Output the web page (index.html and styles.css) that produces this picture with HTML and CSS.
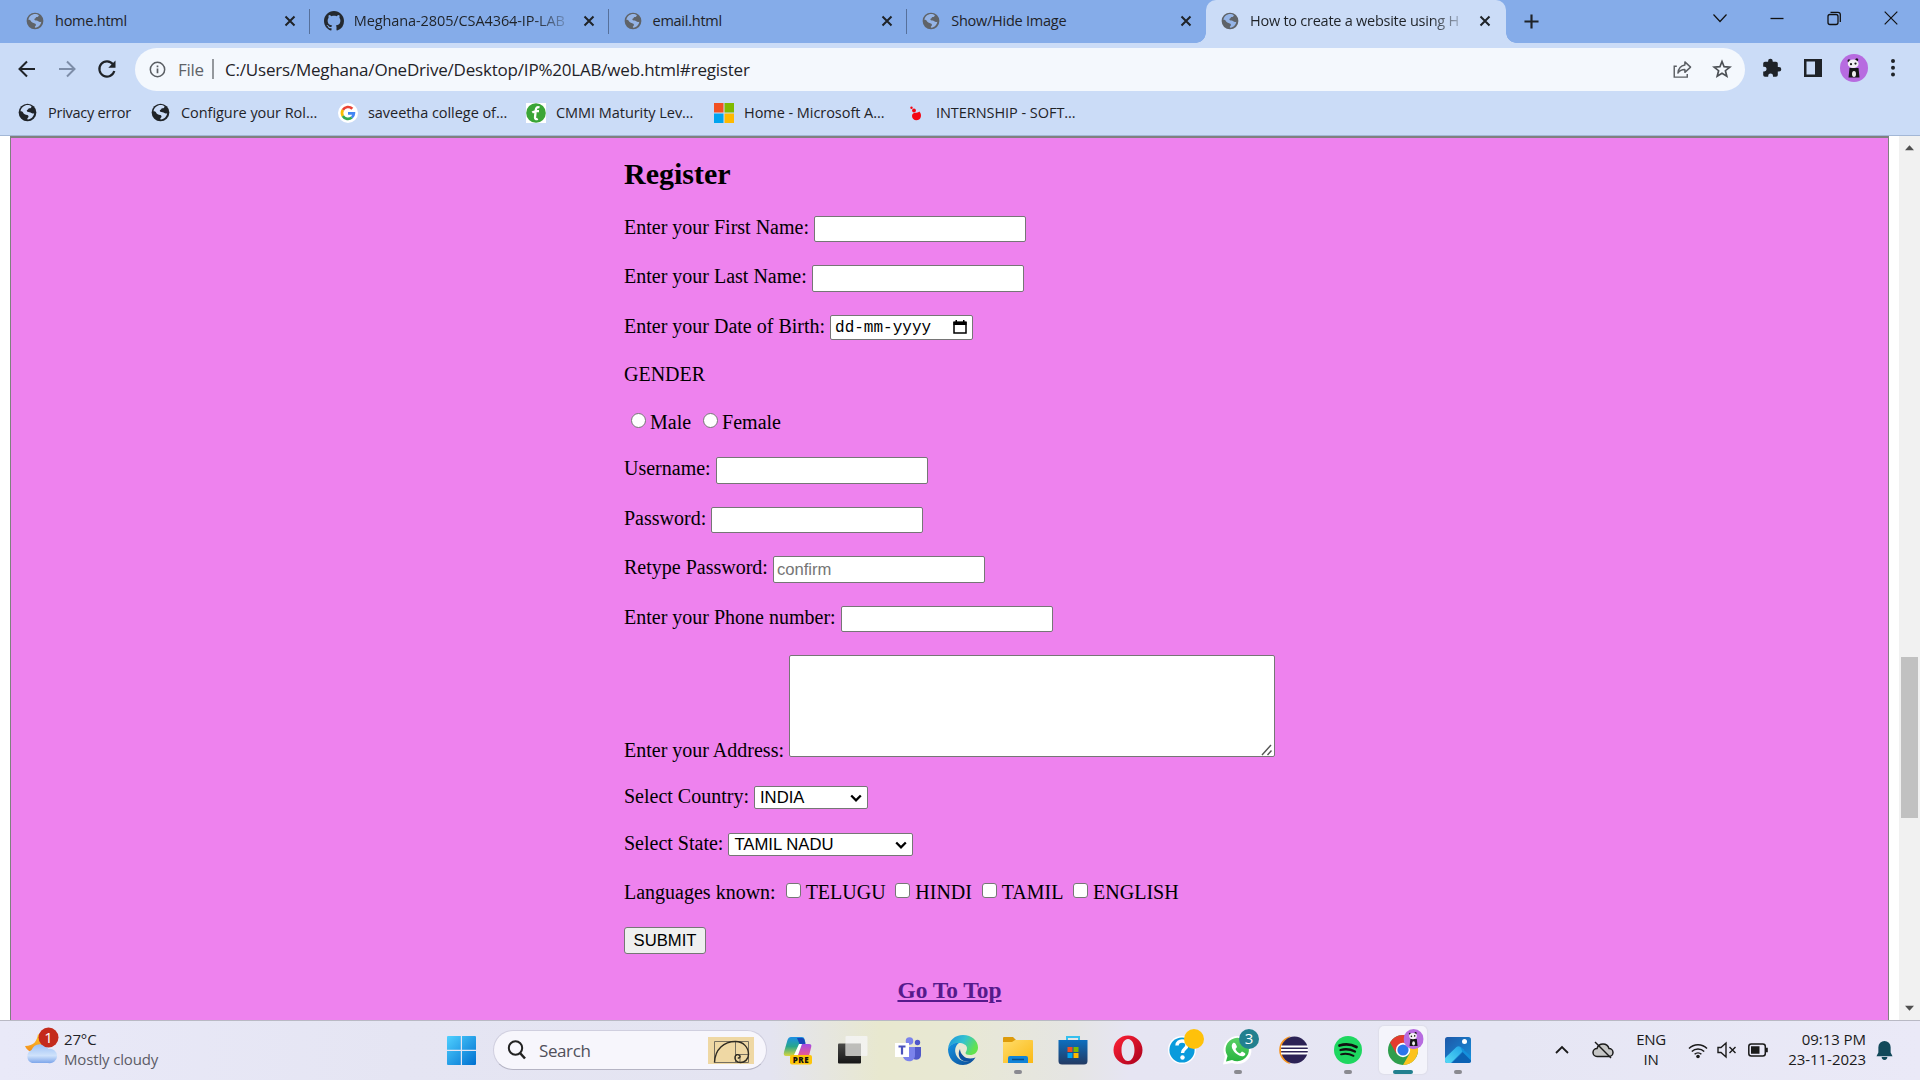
FILE: index.html
```html
<!DOCTYPE html>
<html lang="en">
<head>
<meta charset="utf-8">
<title>How to create a website using HTML</title>
<link rel="stylesheet" href="styles.css">
</head>
<body>
<svg class="defs" width="0" height="0">
  <defs>
    <symbol id="globe" viewBox="0 0 20 20"><circle cx="10" cy="10" r="9.3" fill="currentColor"/><path class="land" d="M7.5 2.7c2.6-1 5-.5 6.8.9-.3 1.500-1.200 2-2.600 1.900-1 .1-.8 1.300-1.600 1.700-1.200.2-.9 1.500-.2 2 1.200.5 3.200.1 4.200 1.400 1 .8 2 .3 2.900.2-.4 3.300-3 6.200-6.600 6.600-1.100-.5-.5-1.700.3-2.200.9-.9.1-2.200-1-2.500-1.700-.5-3.900-1.100-4.500-3-.6-1-1.700-1.200-2.600-1.100.5-2.900 2.100-4.900 4.900-5.900z"/></symbol>
    <symbol id="cross" viewBox="0 0 12 12"><path d="M1.500 1.500l9 9M10.500 1.500l-9 9" stroke="#1f2328" stroke-width="2"/></symbol>
    <symbol id="panda" viewBox="0 0 28 28"><circle cx="14" cy="14" r="14" fill="#b76be0"/><circle cx="9" cy="6.800" r="1.500" fill="#171717"/><circle cx="16.800" cy="5.800" r="1.500" fill="#171717"/><path d="M9.500 14h9l1 9.500H8.500z" fill="#171717"/><ellipse cx="13.200" cy="9.800" rx="5.400" ry="4.300" fill="#f3f0f3"/><circle cx="11" cy="10.200" r="1.100" fill="#171717"/><circle cx="15.500" cy="9.600" r="1.100" fill="#171717"/><ellipse cx="14" cy="20" rx="2" ry="3" fill="#eee"/></symbol>
    <symbol id="caret" viewBox="0 0 12 8"><path d="M1.200 1.500L6 6.300l4.800-4.800" fill="none" stroke="#000" stroke-width="2.300"/></symbol>
    <linearGradient id="win" x1="0" y1="0" x2="1" y2="1"><stop offset="0" stop-color="#4fd0ff"/><stop offset="1" stop-color="#0070d0"/></linearGradient>
    <linearGradient id="cloud" x1="0" y1="0" x2="0" y2="1"><stop offset="0" stop-color="#9cc0f6"/><stop offset=".6" stop-color="#cfe2fb"/><stop offset="1" stop-color="#7ba4ea"/></linearGradient>
    <linearGradient id="moon" x1="0" y1="0" x2="0" y2="1"><stop offset="0" stop-color="#ffc928"/><stop offset="1" stop-color="#f28a1c"/></linearGradient>
    <linearGradient id="copA" x1="0" y1="0" x2="0" y2="1"><stop offset="0" stop-color="#1d8fe6"/><stop offset=".5" stop-color="#29a68b"/><stop offset="1" stop-color="#d8d63e"/></linearGradient>
    <linearGradient id="copB" x1="0" y1="0" x2="0" y2="1"><stop offset="0" stop-color="#a54be3"/><stop offset="1" stop-color="#fb5d7d"/></linearGradient>
    <linearGradient id="edgeA" x1="0" y1="0" x2="1" y2=".4"><stop offset="0" stop-color="#1a8fe0"/><stop offset=".55" stop-color="#34c3cf"/><stop offset="1" stop-color="#62e24e"/></linearGradient>
    <linearGradient id="edgeB" x1="0" y1="0" x2="1" y2="1"><stop offset="0" stop-color="#1593e2"/><stop offset="1" stop-color="#0b4a94"/></linearGradient>
    <linearGradient id="fold" x1="0" y1="0" x2="1" y2="1"><stop offset="0" stop-color="#ffdc6a"/><stop offset="1" stop-color="#fbb914"/></linearGradient>
    <linearGradient id="store" x1="0" y1="0" x2="0" y2="1"><stop offset="0" stop-color="#0d6fbf"/><stop offset="1" stop-color="#233a63"/></linearGradient>
    <linearGradient id="opera" x1="0" y1="0" x2="1" y2="1"><stop offset="0" stop-color="#ff2236"/><stop offset="1" stop-color="#a8001c"/></linearGradient>
    <linearGradient id="task" x1="0" y1="0" x2="0" y2="1"><stop offset="0" stop-color="#4a4a48"/><stop offset="1" stop-color="#161616"/></linearGradient>
    <linearGradient id="photo" x1="0" y1="0" x2="1" y2="1"><stop offset="0" stop-color="#1d58a8"/><stop offset="1" stop-color="#1790dc"/></linearGradient>
    <linearGradient id="hill" x1="0" y1="1" x2="1" y2="0"><stop offset="0" stop-color="#57dbf6"/><stop offset="1" stop-color="#1fa0e6"/></linearGradient>
    <linearGradient id="wa" x1="0" y1="0" x2="0" y2="1"><stop offset="0" stop-color="#5bd066"/><stop offset="1" stop-color="#27b43e"/></linearGradient>
  </defs>
</svg>

<header class="browser">
  <div class="tabstrip">
    <div class="tab"><svg class="fav grey"><use href="#globe"/></svg><span class="title t-home">home.html</span><svg class="x"><use href="#cross"/></svg></div>
    <div class="tab"><svg class="fav gh" viewBox="0 0 16 16"><path fill="#24292f" d="M8 0C3.580 0 0 3.580 0 8c0 3.540 2.290 6.530 5.470 7.590.4.070.55-.17.55-.38 0-.19-.01-.82-.01-1.490-2.010.37-2.530-.49-2.690-.94-.09-.23-.48-.94-.82-1.130-.28-.15-.68-.52-.01-.53.63-.01 1.080.58 1.230.82.72 1.210 1.870.87 2.330.66.070-.52.280-.87.510-1.070-1.780-.2-3.640-.89-3.640-3.950 0-.87.310-1.590.82-2.150-.08-.2-.36-1.020.080-2.120 0 0 .67-.21 2.200.82.640-.18 1.320-.27 2-.27s1.360.09 2 .27c1.530-1.040 2.200-.82 2.200-.82.440 1.100.160 1.920.080 2.120.510.560.82 1.270.82 2.150 0 3.070-1.870 3.750-3.650 3.950.290.250.540.730.540 1.480 0 1.070-.01 1.930-.01 2.200 0 .210.150.460.550.380A8.010 8.010 0 0 0 16 8c0-4.420-3.580-8-8-8z"/></svg><span class="title fade repo">Meghana-2805/CSA4364-IP-LAB</span><svg class="x"><use href="#cross"/></svg></div>
    <div class="tab"><svg class="fav grey"><use href="#globe"/></svg><span class="title">email.html</span><svg class="x"><use href="#cross"/></svg></div>
    <div class="tab last"><svg class="fav grey"><use href="#globe"/></svg><span class="title">Show/Hide Image</span><svg class="x"><use href="#cross"/></svg></div>
    <div class="tab active"><svg class="fav grey"><use href="#globe"/></svg><span class="title fade">How to create a website using H</span><svg class="x"><use href="#cross"/></svg></div>
    <svg class="plus" viewBox="0 0 16 16"><path d="M8 0.500v15M.5 8h15" stroke="#1f2328" stroke-width="2.300"/></svg>
    <div class="controls">
      <svg viewBox="0 0 20 20"><path d="M3.500 6.500l6.500 7 6.500-7" fill="none" stroke="#111" stroke-width="1.200"/></svg>
      <svg viewBox="0 0 20 20"><path d="M3.500 10.500h13" stroke="#111" stroke-width="1.300"/></svg>
      <svg viewBox="0 0 20 20"><rect x="4" y="6.500" width="10" height="10" rx="2" fill="none" stroke="#111" stroke-width="1.300"/><path d="M6.500 4.300h7.500q2.300 0 2.300 2.300v7.400" fill="none" stroke="#111" stroke-width="1.300"/></svg>
      <svg viewBox="0 0 20 20"><path d="M3.700 3.700l12.600 12.600M16.300 3.700L3.700 16.300" stroke="#111" stroke-width="1.200"/></svg>
    </div>
  </div>

  <div class="toolbar">
    <svg class="nav" viewBox="0 0 20 20"><path d="M18 10H3M10 2.500L2.500 10l7.500 7.500" fill="none" stroke="#1f2328" stroke-width="2"/></svg>
    <svg class="nav" viewBox="0 0 20 20"><path d="M2 10h15M10 2.500l7.500 7.500-7.500 7.500" fill="none" stroke="#7d8da8" stroke-width="2"/></svg>
    <svg class="nav" viewBox="0 0 20 20"><path d="M16 5.300A7.600 7.600 0 1 0 17.300 12" fill="none" stroke="#1f2328" stroke-width="2.200"/><path d="M18.500 1.500v7.200h-7.200z" fill="#1f2328"/></svg>
    <div class="omnibox">
      <svg class="info" viewBox="0 0 18 18"><circle cx="9" cy="9" r="7.600" fill="none" stroke="#5a5e63" stroke-width="1.600"/><path d="M9 8v5M9 4.700v1.800" stroke="#5a5e63" stroke-width="1.800"/></svg>
      <span class="scheme">File</span><i class="bar"></i><span class="url">C:/Users/Meghana/OneDrive/Desktop/IP%20LAB/web.html#register</span>
      <svg class="share" viewBox="0 0 20 20"><path d="M4 6.500H1.300V18H15v-3.200" fill="none" stroke="#5a5e63" stroke-width="1.500"/><path d="M12.500 2l6 5.500-6 5.500V10c-3.500 0-5.500 1-7.300 3.800C5.700 9 8 5.800 12.500 5.200z" fill="none" stroke="#5a5e63" stroke-width="1.500" stroke-linejoin="round"/></svg>
      <svg class="star" viewBox="0 0 20 20"><path d="M10 2.500l2.100 5.200 5.700.4-4.400 3.600 1.400 5.500L10 14.300l-4.800 2.900 1.400-5.500L2.200 8.100l5.700-.4z" fill="none" stroke="#4c5055" stroke-width="1.700"/></svg>
    </div>
    <svg class="ext" viewBox="0 0 20 20"><path fill="#1f2328" d="M17 9h-1.200V5.500A1.800 1.800 0 0 0 14 3.700h-3.300V3a2.300 2.300 0 0 0-4.600 0v.7H3A1.800 1.800 0 0 0 1.200 5.500v3.200h1a2.400 2.400 0 0 1 0 4.800h-1V17A1.800 1.800 0 0 0 3 18.800h3.200v-1a2.400 2.400 0 0 1 4.800 0v1h3a1.800 1.800 0 0 0 1.800-1.800v-3.400H17A2.300 2.300 0 0 0 17 9z"/></svg>
    <svg class="side" viewBox="0 0 20 20"><path fill="#1f2328" fill-rule="evenodd" d="M1 1h18v18H1zM3.500 3.500v13H12v-13z"/></svg>
    <svg class="avatar"><use href="#panda"/></svg>
    <svg class="dots" viewBox="0 0 6 20"><circle cx="3" cy="3" r="2" fill="#1f2328"/><circle cx="3" cy="9.700" r="2" fill="#1f2328"/><circle cx="3" cy="16.400" r="2" fill="#1f2328"/></svg>
  </div>

  <nav class="bookmarks">
    <div class="bm b1"><svg class="dark"><use href="#globe"/></svg><span>Privacy error</span></div>
    <div class="bm b2"><svg class="dark"><use href="#globe"/></svg><span>Configure your Rol...</span></div>
    <div class="bm b3"><svg viewBox="0 0 20 20"><circle cx="10" cy="10" r="10" fill="#fff"/><g fill="none" stroke-width="2.700"><path d="M14.300 5.800A6 6 0 0 0 4.800 7" stroke="#ea4335"/><path d="M4.800 7a6 6 0 0 0 0 6" stroke="#fbbc05"/><path d="M4.800 13a6 6 0 0 0 9 1.500" stroke="#34a853"/><path d="M13.800 14.500A5.500 5.500 0 0 0 15.900 10.300H10" stroke="#4285f4"/></g></svg><span>saveetha college of...</span></div>
    <div class="bm b4"><svg viewBox="0 0 20 20"><path fill="#fff" d="M0 0h20v20H0z"/><circle cx="10" cy="10" r="9.800" fill="#3aa537"/><path d="M13.500 4.500c-2.500-1-3.500.5-3.800 3L9 14.500c0 2 1.500 2 2.700 1.200M6.300 9.500c2-1.500 3-1.300 6.700-1.300" fill="none" stroke="#fff" stroke-width="2.300"/></svg><span>CMMI Maturity Lev...</span></div>
    <div class="bm b5"><svg viewBox="0 0 20 20"><path fill="#f25022" d="M0 0h9.500v9.500H0z"/><path fill="#7fba00" d="M10.500 0H20v9.500h-9.500z"/><path fill="#00a4ef" d="M0 10.500h9.500V20H0z"/><path fill="#ffb900" d="M10.500 10.500H20V20h-9.500z"/></svg><span>Home - Microsoft A...</span></div>
    <div class="bm b6"><svg viewBox="0 0 20 20"><path fill="#f40612" d="M6 13c0-3 2.500-3.500 4.500-3.200 1.500-.3 2-.5 2.800-1.300 1.500 1.500 2 3.500 1.500 5.500-.6 2.300-2.300 3.200-4.500 3.200S6 15.500 6 13z"/><circle cx="8" cy="7.500" r="1.900" fill="#f40612"/><circle cx="5.500" cy="4.800" r="1.200" fill="#f40612"/></svg><span>INTERNSHIP - SOFT...</span></div>
  </nav>
</header>

<main class="viewport">
  <section class="register">
    <form class="form">
      <h2>Register</h2>
      <div class="row"><label>Enter your First Name:</label><input type="text" class="field"></div>
      <div class="row h50"><label>Enter your Last Name:</label><input type="text" class="field tall"></div>
      <div class="row h48"><label>Enter your Date of Birth:</label><div class="date"><span>dd-mm-yyyy</span><svg viewBox="0 0 14 14"><path d="M1 2.500h12v10.500H1z" fill="none" stroke="#000" stroke-width="1.500"/><path d="M.5 1.500h13v3.500H.5zM2.500 0h1.500v2H2.500zM10 0h1.500v2H10z"/></svg></div></div>
      <div class="row h48"><label>GENDER</label></div>
      <div class="row h46 choices"><i class="radio"></i><span class="male">Male</span><i class="radio"></i><span>Female</span></div>
      <div class="row h50"><label>Username:</label><input type="text" class="field tall"></div>
      <div class="row"><label>Password:</label><input type="password" class="field"></div>
      <div class="row h50"><label>Retype Password:</label><input type="password" class="field tall" placeholder="confirm"></div>
      <div class="row"><label>Enter your Phone number:</label><input type="text" class="field"></div>
      <div class="row address"><label>Enter your Address:</label><div class="areabox"><textarea class="area"></textarea><svg class="grip" viewBox="0 0 12 12"><path d="M1 11L10 1M6.500 11L10.500 6.500" stroke="#555" stroke-width="1.400"/></svg></div></div>
      <div class="row h47"><label>Select Country:</label><div class="select country"><span>INDIA</span><svg><use href="#caret"/></svg></div></div>
      <div class="row"><label>Select State:</label><div class="select state"><span>TAMIL NADU</span><svg><use href="#caret"/></svg></div></div>
      <div class="row h46 langs"><label>Languages known:</label><i class="check"></i><span>TELUGU</span><i class="check"></i><span>HINDI</span><i class="check"></i><span>TAMIL</span><i class="check"></i><span>ENGLISH</span></div>
      <button type="button" class="submit">SUBMIT</button>
    </form>
    <h3><a href="#top">Go To Top</a></h3>
  </section>
  <aside class="scroll">
    <svg viewBox="0 0 10 6"><path d="M0 5.500L5 0l5 5.500z" fill="#505050"/></svg>
    <div class="track"><div class="thumb"></div></div>
    <svg viewBox="0 0 10 6"><path d="M0 .5L5 6l5-5.500z" fill="#505050"/></svg>
  </aside>
</main>

<footer class="taskbar">
  <div class="weather">
    <svg viewBox="0 0 36 38"><path d="M14 7c-1 7-4 12-13 12 2 6 10 8 15 4 5-5 4-12-2-16z" fill="url(#moon)"/><path d="M8 36a7 7 0 0 1-.5-13 9.500 9.500 0 0 1 17-1A7.200 7.200 0 1 1 24 36z" fill="url(#cloud)"/><circle cx="24.500" cy="10.500" r="10" fill="#c42b1c"/><text x="24.500" y="16" text-anchor="middle" class="badge">1</text></svg>
    <div class="wtext"><span>27°C</span><span class="muted">Mostly cloudy</span></div>
  </div>
  <svg class="start" viewBox="0 0 29 29"><path fill="url(#win)" d="M0 1q0-1 1-1h12.800v13.800H0zM15 0h13q1 0 1 1v12.800H15zM0 15h13.800v14H1q-1 0-1-1zM15 15h14v13q0 1-1 1H15z"/></svg>
  <div class="search">
    <svg class="glass" viewBox="0 0 20 20"><circle cx="8.500" cy="8" r="6.700" fill="none" stroke="#222" stroke-width="2"/><path d="M13 13l5 5.500" stroke="#222" stroke-width="2.600"/></svg>
    <span>Search</span>
    <svg class="spiral" viewBox="0 0 46 27"><path fill="#efd8a4" d="M0 0h46v27H0z"/><path d="M6.500 4.500h34v21h-34zM27.500 4.500v21M27.500 17.500h13M32 17.500v8" fill="none" stroke="#77705f" stroke-width="1"/><path d="M6.500 25.500C7 12 16 4.500 27.500 4.500c8 0 13 6 13 13 0 5-4 8-8 8s-6-3-5.500-5.500 3-3 4.500-1.500-.5 3.500-1.500 2" fill="none" stroke="#2f2b22" stroke-width="1.400"/></svg>
  </div>
  <div class="apps">
    <div class="app"><svg viewBox="0 0 30 30"><path d="M8 2h11q2 0 2.500 2l1 4-6 8-3 5H3q-3 0-2-4L4.500 5Q5.500 2 8 2z" fill="url(#copA)"/><path d="M14 3h5q2 0 2.500 2l1 4h-6z" fill="#1746b8"/><path d="M19 9h7q3 0 2.200 3l-2 8q-1 3-4 3h-9z" fill="url(#copB)"/><path d="M16 9h3l-4 11h-4z" fill="#fff"/><rect x="7" y="20" width="22" height="9.500" rx="2" fill="#fdc50b"/><text x="18" y="27.800" text-anchor="middle" class="pre">PRE</text></svg></div>
    <div class="app"><svg viewBox="0 0 30 30"><rect x="0" y="8.500" width="23" height="20" rx="1" fill="url(#task)"/><rect x="7.500" y="1" width="22" height="20" rx="1" fill="#f4f4f2" opacity=".88"/><path d="M7.500 8.500H23V21H7.500z" fill="#a9a9a4" opacity=".6"/></svg></div>
    <div class="app"><svg viewBox="0 0 30 30"><circle cx="16.500" cy="6" r="3.800" fill="#7b83eb"/><circle cx="24.500" cy="7.500" r="2.700" fill="#5059c9"/><path d="M19 12h9v8c0 5-6 6-9 3z" fill="#5059c9"/><path d="M10 12h12v8c0 8-10 8-12 2z" fill="#7b83eb"/><path fill="#fff" d="M2 8h14v14H2z"/><path d="M5.500 11.500h7M9 11.500v8" stroke="#4b53bc" stroke-width="2.200"/></svg></div>
    <div class="app"><svg viewBox="0 0 30 30"><path d="M0 14C1 5 7 0 15 0c9 0 15 6 15 12.500 0 5-4 7.500-8 7.500-3 0-4.500-1-4.500-2s1.500-2 1.500-5c0-3-4-5-8-5-5 0-9 2-11 6z" fill="url(#edgeA)"/><path d="M0 14C2 9 7 7.500 11 8c-3 2-4.500 6-3.500 10 1 5 6 9 11 8.500 4-.4 6-2 9-4C25 27 20 30 15 30 6 30 0 23 0 14z" fill="url(#edgeB)"/><path d="M12 14c-3 5-.5 12 6 12.500 4 .2 7-1.500 9.500-4-4 1.500-9 1.500-12-1.500-2-2-3.500-4-3.500-7z" fill="#0b4fa0"/></svg></div>
    <div class="app run"><svg viewBox="0 0 30 30"><path d="M0 3q0-1 1-1h9l3 3-3 4H0z" fill="#dd9b0a"/><path d="M0 7h9l3-2h17q1 0 1 1v22H0z" fill="url(#fold)"/><path d="M5 28v-5q0-2 2-2h16q2 0 2 2v5z" fill="#1184d8"/><path d="M9 24.500h12" stroke="#0a4d86" stroke-width="1.500"/></svg></div>
    <div class="app"><svg viewBox="0 0 30 30"><path d="M9 6V2h12v4" fill="none" stroke="#35c0ee" stroke-width="2"/><path d="M.5 5h29v21q0 3.500-3.500 3.500H4Q.5 29.500.5 26z" fill="url(#store)"/><path fill="#f25022" d="M9.500 12h5v5h-5z"/><path fill="#7fba00" d="M15.500 12h5v5h-5z"/><path fill="#00a4ef" d="M9.500 18h5v5h-5z"/><path fill="#ffb900" d="M15.500 18h5v5h-5z"/></svg></div>
    <div class="app"><svg viewBox="0 0 30 30"><path fill="url(#opera)" fill-rule="evenodd" d="M15 .5a14.500 14.500 0 1 0 0 29 14.500 14.500 0 1 0 0-29zM15 4c4 0 6.500 5 6.500 11S19 26 15 26 8.500 21 8.500 15 11 4 15 4z"/></svg></div>
    <div class="app"><svg viewBox="0 0 30 30"><circle cx="14" cy="15" r="14" fill="#fff"/><circle cx="14" cy="15" r="12.600" fill="#0a9bdc"/><path d="M9 10.500c0-6 10-6 10-.5 0 4-4.500 3.500-4.500 8" fill="none" stroke="#fff" stroke-width="3.400"/><circle cx="14.500" cy="22.500" r="2.200" fill="#fff"/><circle cx="26" cy="4" r="10" fill="#ffc10a"/></svg></div>
    <div class="app run"><svg viewBox="0 0 30 30"><path d="M0 29.500l2-8A14 14 0 1 1 9 28z" fill="#fff"/><path d="M3 26.500l1.500-5.500A11.700 11.700 0 1 1 9 25z" fill="url(#wa)"/><path d="M10 8c-3 3 0 8 3 10.500s7 4 9 1.500c1-1.500 0-2-3-3.500l-2 2c-2-.5-4-3-4.500-4.500l1.500-2c-1-3-2-5-4-4z" fill="#fff"/><circle cx="26" cy="4" r="10" fill="#22808f"/><text x="26" y="9.300" text-anchor="middle" class="badge">3</text></svg></div>
    <div class="app"><svg viewBox="0 0 30 30"><path d="M13 1a14.200 14.200 0 0 0 0 28C5 25 5 5 13 1z" fill="#f7941e"/><circle cx="16.500" cy="15" r="13.400" fill="#2c2255"/><path d="M3 11.500h27M3 15h27M3 18.500h27" stroke="#fff" stroke-width="1.800"/></svg></div>
    <div class="app run"><svg viewBox="0 0 30 30"><circle cx="15" cy="15" r="14" fill="#1ed760"/><g fill="none" stroke="#111" stroke-linecap="round"><path d="M6.500 10.500c6-1.800 12-1.200 17 1.500" stroke-width="2.700"/><path d="M7.500 15c5-1.300 10-.8 14.500 1.500" stroke-width="2.300"/><path d="M8 19.300c4-1 8.500-.6 12.500 1.500" stroke-width="1.900"/></g></svg></div>
    <div class="app current"><svg viewBox="0 0 30 30"><circle cx="15" cy="15" r="15" fill="#2e9e4c"/><path d="M2 7.500A15 15 0 0 1 28 7.500L15 8 8.500 18.800z" fill="#e33b2e"/><path d="M28 7.500A15 15 0 0 1 15 30l6.500-11.300L22 8z" fill="#fcc31e"/><circle cx="15" cy="15" r="7.200" fill="#fff"/><circle cx="15" cy="15" r="5.600" fill="#2a74ea"/><g transform="translate(15.500 -6) scale(.72)"><use href="#panda" width="28" height="28"/></g></svg></div>
    <div class="app run"><svg viewBox="0 0 30 30"><rect x="2" y="2" width="26" height="26" rx="2.500" fill="url(#photo)"/><path d="M9 28L20 17l8 7v1.500q0 2.500-2.500 2.500z" fill="#0b62b4"/><path d="M2 23L13.500 12q2-1.500 4 0l3.500 3L8 28H4.500Q2 28 2 25.500z" fill="url(#hill)"/><path d="M17.500 12L28 21.500v4L19.500 17z" fill="#1490dc"/><circle cx="21.500" cy="6.500" r="2.500" fill="#fff"/></svg></div>
  </div>
  <div class="tray">
    <svg class="up" viewBox="0 0 16 16"><path d="M2 11l6-6 6 6" fill="none" stroke="#1a1a1a" stroke-width="1.800"/></svg>
    <svg class="cloud" viewBox="0 0 22 18"><path d="M5 15.500a4 4 0 0 1 0-8 6.300 6.300 0 0 1 12 0 4 4 0 0 1 0 8z" fill="#c6c6c6" stroke="#1a1a1a" stroke-width="1.500"/><path d="M3 1l16 16" stroke="#1a1a1a" stroke-width="1.500"/></svg>
    <div class="lang"><span>ENG</span><span>IN</span></div>
    <svg class="wifi" viewBox="0 0 20 18"><g fill="none" stroke="#1a1a1a" stroke-width="1.500"><path d="M1 7.500a12.500 12.500 0 0 1 18 0M3.800 10.500a8.800 8.800 0 0 1 12.400 0M6.600 13.300a4.900 4.900 0 0 1 6.800 0"/></g><circle cx="10" cy="15.500" r="1.800" fill="#1a1a1a"/></svg>
    <svg class="mute" viewBox="0 0 20 18"><path d="M1 6.500h3L9 2v14l-5-4.500H1zM12.500 6l6 6M18.500 6l-6 6" fill="none" stroke="#1a1a1a" stroke-width="1.400"/></svg>
    <svg class="batt" viewBox="0 0 20 14"><rect x=".8" y="1" width="16.500" height="12" rx="2.500" fill="none" stroke="#1a1a1a" stroke-width="1.500"/><path d="M3 3.300h8.500v7.400H3zM18 4.800h1.800v4.400H18z" fill="#1a1a1a"/></svg>
    <div class="clock"><span>09:13 PM</span><span>23-11-2023</span></div>
    <svg class="bell" viewBox="0 0 18 20"><path d="M9 0a6.500 6.500 0 0 1 6.500 6.500V12L17.500 16H.5L2.500 12V6.500A6.500 6.500 0 0 1 9 0zM6 17h6a3 3 0 0 1-6 0z" fill="#12495a"/></svg>
  </div>
</footer>
</body>
</html>
```
FILE: styles.css
```css
* { box-sizing: border-box; }
body {
  margin: 0;
  width: 1920px;
  height: 1080px;
  overflow: hidden;
  display: flex;
  flex-direction: column;
  background: #fff;
  font-family: "Open Sans", "Noto Sans", sans-serif;
  color: #1f2328;
}
svg { display: block; flex: none; overflow: visible; }
.defs { position: absolute; }
span, label { white-space: nowrap; }

/* Browser frame */
.browser { height: 136px; flex: none; background: #cbdcf7; border-bottom: 1px solid #a3b7d6; }
.tabstrip { height: 43px; background: #85ace9; display: flex; padding-left: 11px; }
.tab { width: 298.750px; height: 43px; display: flex; align-items: center; padding: 0 14px 2px 15px; position: relative; }
.tab::after { content: ""; position: absolute; right: 0; top: 9px; width: 1px; height: 25px; background: #56709b; }
.tab.last::after { display: none; }
.tab.active { background: #cbdcf7; border-radius: 10px 10px 0 0; width: 300px; margin-right: 18px; padding-right: 15px; }
.tab.active::before { content: ""; position: absolute; left: -10px; bottom: 0; width: 10px; height: 10px; background: radial-gradient(circle at 0 0, #85ace9 9.500px, #cbdcf7 10px); }
.tab.active::after { right: -10px; top: auto; bottom: 0; width: 10px; height: 10px; background: radial-gradient(circle at 100% 0, #85ace9 9.500px, #cbdcf7 10px); }
.fav { width: 18px; height: 18px; }
.fav.gh { width: 20px; height: 20px; margin: 0 -1px; }
.dark { color: #1f2328; fill: #cbdcf7; }
.grey { color: #5f6368; fill: #95b4e6; }
.title { font-size: 14.500px; letter-spacing: -.25px; margin-left: 11px; width: 217px; line-height: 22px; }
.repo { letter-spacing: -.1px; }
.fade { -webkit-mask-image: linear-gradient(90deg, #000 180px, transparent 220px); mask-image: linear-gradient(90deg, #000 180px, transparent 220px); }
.x { width: 12px; height: 12px; margin-left: auto; }
.plus { width: 15px; height: 15px; margin-top: 14px; }
.controls { margin-left: auto; display: flex; gap: 37px; padding: 8px 19px 0 0; }
.controls svg { width: 20px; height: 20px; }

.toolbar { height: 52px; display: flex; align-items: center; padding: 0 24px 0 17px; }
.nav { width: 20px; height: 20px; margin: 0 20px 1px 0; }
.nav:nth-child(3) { margin-right: 18px; }
.omnibox { width: 1610px; height: 43px; border-radius: 22px; background: #f4f8fd; display: flex; align-items: center; padding-left: 14px; margin-right: 17px; }
.info { width: 17px; height: 17px; }
.scheme, .url { font-size: 17px; line-height: 24px; padding-top: 1px; }
.scheme { color: #5f6368; margin-left: 12px; letter-spacing: -.3px; width: 28px; }
.bar { width: 2px; height: 20px; background: #94989d; margin: 0 11px 0 6px; }
.url { letter-spacing: -.2px; }
.share { width: 19px; height: 19px; margin-left: auto; }
.star { width: 20px; height: 20px; margin: 0 13px 0 20px; }
.ext { width: 20px; height: 20px; margin: 0 21px 3px 0; }
.side { width: 20px; height: 20px; margin: 0 17px 3px 0; }
.avatar { width: 28px; height: 28px; margin: 0 22px 3px 0; }
.dots { width: 6px; height: 20px; margin-bottom: 2px; }

.bookmarks { display: flex; height: 35px; align-items: center; padding-left: 18px; }
.bm { display: flex; align-items: center; font-size: 14.500px; letter-spacing: -.05px; }
.bm svg { width: 20px; height: 20px; margin-right: 10px; }
.bm .dark { width: 19px; height: 19px; margin-right: 11px; }
.bm span { padding-bottom: 1px; }
.b1 { width: 133px; letter-spacing: -.25px; }
.b2 { width: 187px; }
.b3, .b4 { width: 188px; }
.b5 { width: 192px; }

/* Page */
.viewport { height: 884px; flex: none; display: flex; background: #fff; padding-left: 10px; }
.register {
  width: 1879px;
  margin-right: 10px;
  background: #ee82ee;
  border: solid #808080;
  border-width: 2px 1px 0;
  font-family: "Liberation Serif", "Times New Roman", serif;
  font-size: 20px;
  color: #000;
}
.form { margin-left: 613px; display: flex; flex-direction: column; align-items: flex-start; }
h2 { font-size: 30px; line-height: 34px; margin: 19px 0 25px; }
.row { display: flex; align-items: flex-start; height: 49px; line-height: 22px; }
.h50 { height: 50px; }
.h48 { height: 48px; }
.h47 { height: 47px; }
.h46 { height: 46px; }
.row label { margin-right: 5px; }
.field { font: 16.670px "Liberation Sans", Arial, sans-serif; width: 212px; height: 26px; border: 1px solid #767676; border-radius: 2px; padding: 1px 3px; margin: 0; background: #fff; outline: 0; }
.tall { height: 27px; }
.field::placeholder { color: #757575; }
.date { width: 143px; height: 25px; border: 1px solid #767676; border-radius: 2px; background: #fff; display: flex; align-items: center; padding: 0 5px 0 4px; justify-content: space-between; font: 16px "Liberation Mono", monospace; }
.date svg { width: 14px; height: 14px; margin-bottom: 1px; }
.choices { padding-left: 7px; }
.radio { width: 15px; height: 15px; border: 1px solid #767676; border-radius: 50%; background: #fff; margin: 2px 4px 0 0; }
.male { margin-right: 12px; }
.address { height: 130px; }
.address label { margin-top: 84px; }
.areabox { position: relative; }
.area { display: block; width: 486px; height: 102px; border: 1px solid #767676; border-radius: 2px; padding: 2px; margin: 0; resize: none; background: #fff; }
.grip { position: absolute; right: 2px; bottom: 1px; width: 12px; height: 12px; }
.select { display: flex; justify-content: space-between; align-items: center; height: 23px; margin-top: 1px; padding: 0 5px 0 5px; border: 1px solid #767676; border-radius: 2px; background: #fff; font: 16.670px "Liberation Sans", Arial, sans-serif; }
.select svg { width: 12px; height: 8px; }
.country { width: 114px; }
.state { width: 185px; }
.check { width: 15px; height: 15px; border: 1px solid #767676; border-radius: 3px; background: #fff; margin: 2px 5px 0 0; }
.langs label { margin-right: 10px; }
.langs span { margin-right: 9.700px; }
.submit { width: 82px; height: 27px; padding: 0; margin: 0; border: 1px solid #767676; border-radius: 3px; background: #efefef; color: #000; font: 16.670px "Liberation Sans", Arial, sans-serif; }
h3 { font-size: 23.400px; line-height: 28px; text-align: center; margin: 22px 0 0; }
h3 a { color: #551a8b; }

.scroll { width: 21px; background: #f1f1f1; display: flex; flex-direction: column; align-items: center; padding: 9px 0; }
.scroll svg { width: 9px; height: 6px; }
.track { flex: 1; width: 17px; padding-top: 506px; }
.thumb { height: 161px; background: #c1c1c1; }

/* Taskbar */
.taskbar {
  height: 60px;
  flex: none;
  display: flex;
  align-items: flex-start;
  border-top: 1px solid #b9b9c4;
  background: linear-gradient(90deg, #e9e9f8 0, #e5e5f3 400px, #e4e4f1 770px, #e8e8cf 880px, #e8e8d4 960px, #e5e5e3 1070px, #e6e5f3 1130px, #e6e6f4 1500px, #eae9f7 1920px);
}
.badge { font: 15px "Open Sans", sans-serif; fill: #fff; }
.pre { font: 800 8px "Open Sans", sans-serif; letter-spacing: .5px; fill: #111; }
.weather { display: flex; width: 422px; padding: 6px 0 0 24px; }
.weather svg { width: 36px; height: 38px; }
.wtext { display: flex; flex-direction: column; padding-left: 4px; font-size: 15px; line-height: 20px; padding-top: 2px; letter-spacing: -.15px; }
.muted { color: #5c5c66; }
.start { width: 29px; height: 29px; margin: 15px 17px 0 25px; }
.search { width: 274px; height: 40px; margin-top: 9px; border-radius: 20px; border: 1px solid #d0cfdf; border-bottom-color: #b5b4c4; background: #f7f6fc; display: flex; align-items: center; padding: 0 12px 0 13px; }
.glass { width: 20px; height: 20px; margin-right: 12px; }
.search span { font-size: 17px; color: #50505a; letter-spacing: -.4px; }
.spiral { width: 46px; height: 27px; margin-left: auto; }
.apps { display: flex; margin-left: 3.500px; }
.app { width: 55px; height: 59px; display: flex; flex-direction: column; align-items: center; padding-top: 14px; }
.app svg { width: 30px; height: 30px; }
.run::after { content: ""; width: 8px; height: 4px; border-radius: 2px; background: #8a8a90; margin-top: 5px; }
.current { width: 48px; height: 48px; margin: 5px 3.500px 0; padding-top: 9px; border-radius: 5px; background: #f4f4fb; box-shadow: 0 0 1px 1px #dedeea; }
.current::after { content: ""; width: 20px; height: 4px; border-radius: 2px; background: #22808f; margin-top: 5px; }
.tray { margin-left: auto; display: flex; height: 58px; align-items: center; padding-right: 27px; font-size: 15px; line-height: 20px; letter-spacing: -.3px; color: #1a1a1a; }
.lang, .clock { display: flex; flex-direction: column; padding-bottom: 2px; }
.up { width: 16px; height: 16px; margin-right: 22px; }
.cloud { width: 22px; height: 18px; margin-right: 12px; }
.lang { width: 50px; align-items: center; margin-right: 12px; }
.wifi { width: 20px; height: 18px; margin-right: 9px; }
.mute { width: 20px; height: 18px; margin-right: 11px; }
.batt { width: 20px; height: 14px; }
.clock { width: 98px; align-items: flex-end; margin-right: 10px; letter-spacing: -.05px; }
.bell { width: 17px; height: 19px; }
```
